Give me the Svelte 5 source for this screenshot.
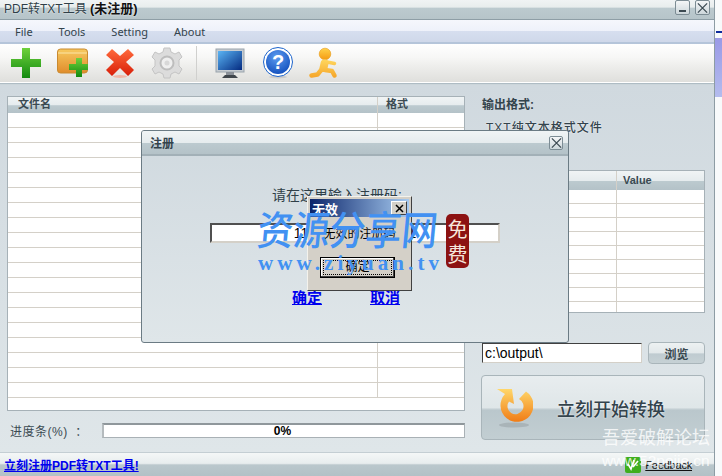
<script>
  const menus = ["File", "Tools", "Setting", "About"];
  const leftRows = Array.from({ length: 19 });
  const rightRows = Array.from({ length: 9 });
</script>

<div class="desktop">
  <div class="window">
    <header class="titlebar">
      <span class="apptitle">PDF转TXT工具 <b>(未注册)</b></span>
      <div class="winbtns">
        <span class="winbtn min"></span>
        <span class="winbtn">
          <svg width="14" height="13" viewBox="0 0 14 13"><path d="M2 1.5 12 11.5M12 1.5 2 11.5" stroke="#3c4a52" stroke-width="1.4" fill="none" /></svg>
        </span>
      </div>
    </header>

    <nav class="menubar">
      {#each menus as m}<span>{m}</span>{/each}
    </nav>

    <div class="toolbar">
      <svg class="tool" width="32" height="32" viewBox="0 0 32 32">
        <defs>
          <linearGradient id="g1" x1="0" y1="0" x2="0" y2="1"><stop offset="0" stop-color="#6fd13c" /><stop offset="1" stop-color="#128a10" /></linearGradient>
          <linearGradient id="g2" x1="0" y1="0" x2="0" y2="1"><stop offset="0" stop-color="#f7c95e" /><stop offset="1" stop-color="#e08c2c" /></linearGradient>
          <linearGradient id="g3" x1="0" y1="0" x2="0" y2="1"><stop offset="0" stop-color="#ff6a3c" /><stop offset="1" stop-color="#d81e08" /></linearGradient>
          <linearGradient id="g4" x1="0" y1="0" x2="1" y2="1"><stop offset="0" stop-color="#5ab4f4" /><stop offset="1" stop-color="#042a80" /></linearGradient>
          <radialGradient id="g5" cx=".45" cy=".3" r=".8"><stop offset="0" stop-color="#5c9cf0" /><stop offset="1" stop-color="#0c48b8" /></radialGradient>
          <linearGradient id="g6" x1="0" y1="0" x2="0" y2="1"><stop offset="0" stop-color="#ffd24a" /><stop offset="1" stop-color="#f59a12" /></linearGradient>
          <linearGradient id="g7" gradientUnits="userSpaceOnUse" x1="0" y1="12" x2="0" y2="31"><stop offset="0" stop-color="#ffd860" /><stop offset="1" stop-color="#f5a428" /></linearGradient>
        </defs>
        <path d="M12 1h8v11h11v8H20v11h-8V20H1v-8h11z" fill="url(#g1)" />
      </svg>
      <svg class="tool" width="32" height="32" viewBox="0 0 32 32">
        <rect x="0.5" y="2" width="30" height="24" rx="3" fill="url(#g2)" stroke="#c98a30" />
        <path d="M1 6h29" stroke="#fbe6a8" />
        <path d="M19 11h6v6h6v6h-6v7h-6v-7h-7v-6h7z" fill="url(#g1)" />
      </svg>
      <svg class="tool" width="32" height="32" viewBox="0 0 32 32">
        <ellipse cx="16" cy="29.5" rx="7" ry="1.5" fill="#f0b8a8" />
        <path d="M8 2 16 9 24 2 30 8 22 15 30 23 24 29 16 21 8 29 2 23 10 15 2 8z" fill="url(#g3)" />
      </svg>
      <svg class="tool" width="32" height="32" viewBox="0 0 32 32">
        <path d="M13 1h6l1 4 4 2 4-2 3 5-3 3v6l3 3-3 5-4-2-4 2-1 4h-6l-1-4-4-2-4 2-3-5 3-3v-6l-3-3 3-5 4 2 4-2z" fill="#dcdcdc" stroke="#c4c4c4" />
        <circle cx="16" cy="16" r="6.5" fill="#efefef" stroke="#bdbdbd" stroke-width="2" />
        <circle cx="16" cy="16" r="2.5" fill="#d8d8d8" />
      </svg>
      <span class="sep"></span>
      <svg class="tool" width="32" height="32" viewBox="0 0 32 32">
        <rect x="1" y="2" width="28" height="23" fill="#c6ccd2" stroke="#9aa4ac" />
        <rect x="3" y="4" width="24" height="19" fill="url(#g4)" />
        <path d="M11 25h8v3h-8z" fill="#8a9098" />
        <path d="M7 31l3-3h10l3 3z" fill="#40464c" />
      </svg>
      <svg class="tool" width="32" height="32" viewBox="0 0 32 32">
        <ellipse cx="16" cy="30" rx="9" ry="1.5" fill="#ccc" />
        <circle cx="16" cy="15" r="14.5" fill="#fff" stroke="#1c64cc" />
        <circle cx="16" cy="15" r="12" fill="url(#g5)" />
        <text x="16" y="22" class="qmark">?</text>
      </svg>
      <svg class="tool" width="32" height="32" viewBox="0 0 32 32">
        <circle cx="16" cy="7" r="5.8" fill="url(#g6)" stroke="#e89a18" stroke-width=".6" />
        <g fill="none" stroke="url(#g7)" stroke-linecap="round" stroke-linejoin="round">
          <path d="M15.500 16.500 14.500 21" stroke-width="8" />
          <path d="M13 22 8.500 27.500 2.500 28.500" stroke-width="4.500" />
          <path d="M16 23 23 24 25.500 28.500" stroke-width="4.500" />
          <path d="M18 15 25.500 16.500" stroke-width="3.500" />
        </g>
      </svg>
    </div>

    <main class="content">
      <section class="left">
        <div class="table files">
          <div class="thead">
            <span class="col-name">文件名</span>
            <span class="col-type">格式</span>
          </div>
          {#each leftRows as _}
            <div class="row"><span class="col-name"></span><span class="col-type"></span></div>
          {/each}
        </div>
        <div class="progress-row">
          <span class="plabel">进度条(%)  ：</span>
          <div class="pbar">0%</div>
        </div>
      </section>

      <section class="right">
        <div class="outlabel">输出格式:</div>
        <div class="outvalue">TXT纯文本格式文件</div>
        <div class="table props">
          <div class="thead">
            <span class="col-key"></span>
            <span class="col-val">Value</span>
          </div>
          {#each rightRows as _}
            <div class="row"><span class="col-key"></span><span class="col-val"></span></div>
          {/each}
        </div>
        <div class="pathrow">
          <input class="path" value="c:\output\" readonly />
          <button class="browse">浏览</button>
        </div>
        <button class="convert">
          <svg width="38" height="40" viewBox="0 0 38 40">
            <defs>
              <linearGradient id="g8" x1="0" y1="0" x2="0" y2="1"><stop offset="0" stop-color="#ffd76a" /><stop offset="1" stop-color="#f07c16" /></linearGradient>
            </defs>
            <ellipse cx="19" cy="37" rx="15" ry="2.5" fill="#a9b4b8" />
            <path d="M10 6A16.5 16.5 0 1 0 31 3.5L24 11A8 8 0 1 1 14 13.5L19 16 17 1 2 1z" fill="url(#g8)" />
          </svg>
          <span>立刻开始转换</span>
        </button>
      </section>
    </main>

    <footer class="statusbar">
      <a class="register" href="#reg">立刻注册PDF转TXT工具!</a>
      <span class="feedback">
        <svg width="16" height="16" viewBox="0 0 16 16">
          <rect width="16" height="16" rx="2" fill="#3fae1e" />
          <path d="M3 7l3 5 3-9M8 10l5-6" stroke="#fff" stroke-width="1.6" fill="none" />
        </svg>
        <a href="#fb">Feedback</a>
      </span>
    </footer>
  </div>

  <div class="outside">
    <span class="navyline"></span>
    <span class="purple"></span>
  </div>

  <div class="modal">
    <div class="modal-title">
      <span>注册</span>
      <span class="winbtn">
        <svg width="14" height="13" viewBox="0 0 14 13"><path d="M2 1.5 12 11.5M12 1.5 2 11.5" stroke="#3c4a52" stroke-width="1.4" fill="none" /></svg>
      </span>
    </div>
    <div class="modal-body">
      <p class="prompt">请在这里输入注册码:</p>
      <input class="code" value="111111111111111111" readonly />
      <div class="links">
        <a href="#ok">确定</a>
        <a href="#no">取消</a>
      </div>
    </div>
  </div>

  <div class="alert">
    <div class="alert-title">
      <span>无效</span>
      <span class="alert-x">
        <svg width="9" height="9" viewBox="0 0 9 9"><path d="M1 1 8 8M8 1 1 8" stroke="#000" stroke-width="1.5" /></svg>
      </span>
    </div>
    <p>无效的注册码</p>
    <button class="alert-ok"><span>确定</span></button>
  </div>

  <div class="watermark">
    <div class="wm-big">资源分享网</div>
    <div class="wm-url">www.ziyuan.tv</div>
  </div>
  <div class="seal"><span>免</span><span>费</span></div>

  <div class="pojie">
    <div class="pj-name">吾爱破解论坛</div>
    <div class="pj-url">www.52pojie.cn</div>
  </div>
</div>

<style>
  :global(body) {
    margin: 0;
    background: #fff;
  }

  .desktop {
    position: relative;
    display: flex;
    width: 722px;
    height: 476px;
    overflow: hidden;
    font-family: "Liberation Sans", "Noto Sans CJK SC", sans-serif;
    font-size: 12px;
    color: #2f3f48;
  }

  .window {
    display: flex;
    flex-direction: column;
    width: 715px;
    flex: none;
    border-right: 1px solid #8d9ca4;
    box-sizing: border-box;
    background: #fff;
  }

  .outside {
    flex: 1;
    display: flex;
    flex-direction: column;
    padding-top: 31px;
    background: #f8fafb;
  }
  .navyline {
    height: 2px;
    margin-left: 1px;
    background: #0c2a9c;
  }
  .purple {
    height: 59px;
    margin-top: 5px;
    background: linear-gradient(#9a9ae6, #b4bcee);
  }

  .titlebar {
    height: 19px;
    flex: none;
    display: flex;
    align-items: flex-start;
    justify-content: space-between;
    padding: 0 4px 0 4px;
    background: linear-gradient(#f0f3f4 0, #e8eded 38%, #bccacf 42%, #b6c4c9 100%);
    border-bottom: 1px solid #8e9ea6;
  }
  .apptitle {
    font-size: 12px;
    line-height: 18px;
    color: #2f3f48;
    text-shadow: 0 0 2px #fff;
  }
  .apptitle b {
    font-size: 13px;
    color: #111;
  }

  .winbtns {
    display: flex;
    gap: 5px;
  }
  .winbtn {
    display: flex;
    align-items: center;
    justify-content: center;
    width: 14px;
    height: 14px;
    box-sizing: border-box;
    border: 1px solid #7c8c94;
    border-radius: 2px;
    background: linear-gradient(#f4f6f7, #cdd7db);
  }
  .winbtns .winbtn {
    width: 15px;
    height: 15px;
  }
  .winbtn svg {
    width: 13px;
    height: 12px;
    flex: none;
  }
  .winbtn.min {
    position: relative;
  }
  .winbtn.min::after {
    content: "";
    position: absolute;
    left: 3px;
    bottom: 2px;
    width: 7px;
    height: 2px;
    background: #3c4a52;
  }

  .menubar {
    height: 24px;
    flex: none;
    display: flex;
    align-items: center;
    gap: 26px;
    padding-left: 15px;
    box-sizing: border-box;
    background: linear-gradient(#f5f7fc 0, #eef1fa 50%, #d6deef 52%, #cfd8ea 100%);
    border-bottom: 2px solid #b5c5da;
    font-family: "Noto Sans", sans-serif;
    font-size: 11px;
    color: #33434c;
  }

  .toolbar {
    height: 39px;
    flex: none;
    display: flex;
    align-items: center;
    gap: 15px;
    padding-left: 10px;
    box-sizing: border-box;
    background: linear-gradient(#fff 0, #f7f7f6 35%, #efefed 55%, #dfdfdc 100%);
    border-bottom: 1px solid #fff;
    box-shadow: 0 1px 0 #aebcc4;
  }
  .tool {
    flex: none;
  }
  .qmark {
    font-family: "Liberation Sans", sans-serif;
    font-size: 20px;
    font-weight: 700;
    fill: #fff;
    text-anchor: middle;
  }
  .sep {
    width: 1px;
    height: 34px;
    margin: 0 3px 0 -2px;
    background: #d0d0ce;
  }

  .content {
    flex: 1;
    display: flex;
    gap: 16px;
    padding: 11px 0 0 7px;
    margin-top: 1px;
    background: linear-gradient(#d0d9df, #dfe6e9);
    border-top: 1px solid #cbd5da;
    min-height: 0;
  }

  .left {
    width: 458px;
    flex: none;
  }
  .right {
    width: 224px;
    flex: none;
  }

  .table {
    box-sizing: border-box;
    background: #fff;
    border: 1px solid #a6b1b7;
    overflow: hidden;
  }
  .files {
    height: 315px;
  }
  .props {
    height: 143px;
    margin-top: 34px;
  }
  .thead {
    display: flex;
    height: 16px;
    background: linear-gradient(#f0f4f5 0, #e6ecee 50%, #bccacf 54%, #b4c2c8 100%);
    font-size: 11px;
    font-weight: 700;
    line-height: 15px;
    color: #3a4a52;
  }
  .props .thead {
    height: 19px;
    line-height: 19px;
  }
  .row {
    display: flex;
    height: 15px;
    box-sizing: border-box;
    border-bottom: 1px solid #d4d0c8;
  }
  .props .row {
    height: 14px;
  }
  .props .row:first-of-type {
    height: 13px;
  }
  .col-name {
    width: 369px;
    padding-left: 10px;
    box-sizing: border-box;
  }
  .col-type {
    flex: 1;
    padding-left: 8px;
    border-left: 1px solid #d4d0c8;
  }
  .col-key {
    width: 134px;
  }
  .col-val {
    flex: 1;
    padding-left: 6px;
    border-left: 1px solid #d4d0c8;
  }

  .progress-row {
    display: flex;
    align-items: center;
    margin-top: 12px;
    height: 14px;
  }
  .plabel {
    width: 95px;
    padding-left: 3px;
    box-sizing: border-box;
    color: #3a4a52;
    letter-spacing: 0.5px;
    white-space: pre;
  }
  .pbar {
    flex: 1;
    height: 15px;
    box-sizing: border-box;
    padding-right: 3px;
    background: #fff;
    border: 1px solid #a9b1b5;
    border-top: 2px solid #8f979b;
    border-left: 2px solid #b5bbbe;
    font-size: 12px;
    font-weight: 700;
    line-height: 12px;
    text-align: center;
    color: #000;
  }

  .outlabel {
    margin: 2px 0 0 1px;
    font-weight: 700;
    line-height: 15px;
    color: #33434c;
  }
  .outvalue {
    margin: 8px 0 0 5px;
    font-size: 12px;
    line-height: 15px;
    font-weight: 500;
    letter-spacing: 1px;
    color: #33434c;
    text-shadow: 0 0 2px #fff;
  }

  .pathrow {
    display: flex;
    align-items: center;
    gap: 6px;
    height: 22px;
    margin: 29px 0 0 1px;
  }
  .path {
    width: 160px;
    height: 20px;
    box-sizing: border-box;
    padding: 0 2px;
    background: #fff;
    border: 1px solid #d4d0c8;
    border-top: 1px solid #404040;
    border-left: 1px solid #404040;
    outline: none;
    font: 14px "Liberation Sans", sans-serif;
    color: #000;
  }
  .browse {
    width: 57px;
    height: 22px;
    padding: 0;
    border: 1px solid #a9b5ba;
    border-radius: 4px;
    background: linear-gradient(#edf1f2 0, #e2e8ea 50%, #bfcbd0 54%, #c6d1d5 100%);
    font: 700 12px "Liberation Sans", "Noto Sans CJK SC", sans-serif;
    color: #3a4a52;
  }

  .convert {
    display: flex;
    align-items: center;
    gap: 24px;
    width: 224px;
    height: 65px;
    margin-top: 11px;
    padding: 0 0 0 13px;
    border: 1px solid #a9b5ba;
    border-radius: 4px;
    background: linear-gradient(#e8edef 0, #dfe6e8 50%, #bac7cc 54%, #c2ced2 100%);
    font: 500 18px "Liberation Sans", "Noto Sans CJK SC", sans-serif;
    color: #33434c;
    text-shadow: 0 0 2px #fff;
  }

  .statusbar {
    height: 24px;
    flex: none;
    display: flex;
    align-items: center;
    justify-content: space-between;
    padding: 0 22px 0 4px;
    box-sizing: border-box;
    border-top: 1px solid #c4ced3;
    background: linear-gradient(#f4f7f7 0, #e8edee 45%, #bac7cc 52%, #b3c1c6 100%);
  }
  .register {
    font-size: 12px;
    font-weight: 700;
    color: #0000ee;
  }
  .feedback {
    display: flex;
    align-items: center;
    gap: 4px;
    padding-top: 1px;
  }
  .feedback a {
    font-size: 11px;
    letter-spacing: -0.2px;
    color: #111;
  }

  .modal {
    position: absolute;
    left: 141px;
    top: 130px;
    width: 428px;
    height: 213px;
    box-sizing: border-box;
    display: flex;
    flex-direction: column;
    border: 1px solid #6b7b84;
    border-radius: 3px;
    background: linear-gradient(#d0d9df, #dfe6e9);
    overflow: hidden;
  }
  .modal-title {
    height: 25px;
    flex: none;
    display: flex;
    align-items: center;
    justify-content: space-between;
    padding: 0 5px 0 8px;
    background: linear-gradient(#f0f4f5 0, #e6ecee 50%, #bccacf 54%, #b4c2c8 100%);
    border-bottom: 2px solid #a2b0b7;
    font-size: 12px;
    font-weight: 700;
    color: #33434c;
    box-sizing: border-box;
  }
  .modal-body {
    flex: 1;
    display: flex;
    flex-direction: column;
    align-items: center;
  }
  .prompt {
    margin: 30px 36px 0 0;
    font-size: 14px;
    line-height: 18px;
    color: #2f3f48;
  }
  .code {
    width: 290px;
    height: 20px;
    margin-top: 19px;
    box-sizing: border-box;
    padding: 0;
    background: #fff;
    border: 2px solid #d4d0c8;
    border-top-color: #505050;
    border-left-color: #505050;
    outline: none;
    text-align: center;
    font: 14px "Liberation Sans", sans-serif;
    color: #000;
  }
  .links {
    display: flex;
    gap: 48px;
    margin: 46px 18px 0 0;
  }
  .links a {
    font-size: 15px;
    font-weight: 700;
    line-height: 18px;
    color: #0000ee;
  }

  .alert {
    position: absolute;
    left: 307px;
    top: 196px;
    width: 105px;
    height: 95px;
    box-sizing: border-box;
    padding: 2px;
    background: #d4d0c8;
    border: 1px solid;
    border-color: #f4f2ec #404040 #404040 #f4f2ec;
    text-align: center;
  }
  .alert-title {
    display: flex;
    align-items: center;
    justify-content: space-between;
    height: 18px;
    padding: 0 2px 0 2px;
    background: linear-gradient(90deg, #0a246a, #a6caf0);
    font-size: 13px;
    font-weight: 700;
    color: #fff;
  }
  .alert-x {
    display: flex;
    align-items: center;
    justify-content: center;
    width: 14px;
    height: 12px;
    background: #d4d0c8;
    border: 1px solid;
    border-color: #fff #404040 #404040 #fff;
  }
  .alert p {
    margin: 9px 0 0;
    font-size: 12px;
    line-height: 16px;
    color: #000;
  }
  .alert-ok {
    display: block;
    width: 75px;
    height: 21px;
    margin: 15px 0 0 10px;
    padding: 2px;
    background: #d4d0c8;
    border: 1px solid #000;
    box-shadow: inset -1px -1px 0 #404040, inset 1px 1px 0 #fff;
    font: 12px "Liberation Sans", "Noto Sans CJK SC", sans-serif;
    color: #000;
  }
  .alert-ok span {
    display: block;
    line-height: 13px;
    border: 1px dotted #000;
  }

  .watermark {
    position: absolute;
    left: 258px;
    top: 204px;
    color: #4291f2;
    pointer-events: none;
  }
  .wm-big {
    font-family: "Noto Sans CJK SC", sans-serif;
    font-size: 36px;
    font-weight: 500;
    line-height: 46px;
    white-space: nowrap;
    transform: scaleY(1.12) skewX(-6deg);
  }
  .wm-url {
    margin-top: 2px;
    font-family: "Liberation Serif", serif;
    font-size: 21px;
    font-weight: 700;
    line-height: 22px;
    letter-spacing: 4.1px;
    white-space: nowrap;
  }
  .seal {
    position: absolute;
    left: 446px;
    top: 214px;
    display: flex;
    flex-direction: column;
    align-items: center;
    justify-content: center;
    width: 23px;
    height: 54px;
    border-radius: 5px;
    background: #8c1212;
    color: #f6e6dc;
    font-family: "Noto Sans CJK SC", sans-serif;
    font-size: 20px;
    line-height: 25px;
  }

  .pojie {
    position: absolute;
    left: 602px;
    top: 427px;
    color: rgba(255, 255, 255, 0.8);
    pointer-events: none;
    white-space: nowrap;
  }
  .pj-name {
    font-size: 18px;
    line-height: 22px;
  }
  .pj-url {
    margin-top: 2px;
    font-size: 15.5px;
    line-height: 20px;
  }
</style>
